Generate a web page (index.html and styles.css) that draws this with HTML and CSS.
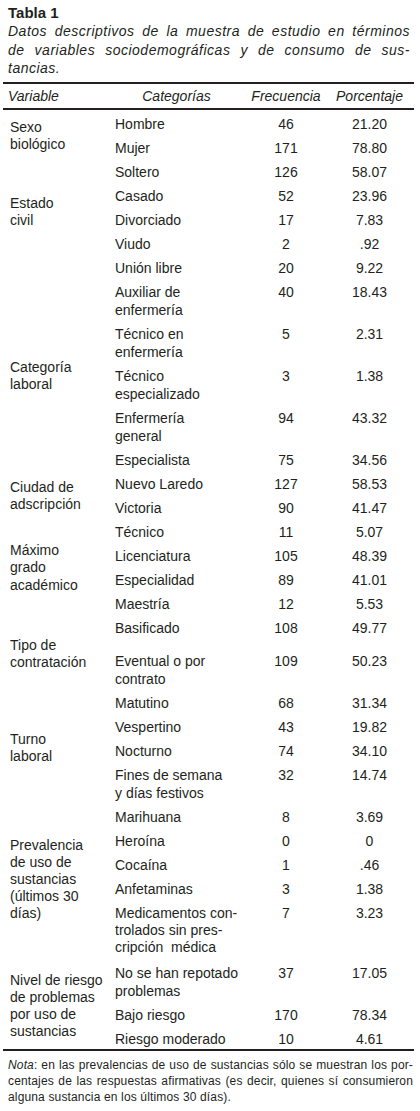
FILE: index.html
```html
<!DOCTYPE html>
<html lang="es">
<head>
<meta charset="utf-8">
<title>Tabla 1</title>
<link rel="stylesheet" href="styles.css">
</head>
<body>
<div class="page">
  <p class="title">Tabla 1</p>
  <p class="caption">
    <span class="jl">Datos descriptivos de la muestra de estudio en términos</span>
    <span class="jl">de variables sociodemográficas y de consumo de sus-</span>
    <span class="ll">tancias.</span>
  </p>
  <table class="data">
    <colgroup>
      <col class="c-var"><col class="c-cat"><col class="c-freq"><col class="c-pct">
    </colgroup>
    <thead>
      <tr><th class="h-var">Variable</th><th class="h-cat">Categorías</th><th class="h-num">Frecuencia</th><th class="h-num">Porcentaje</th></tr>
    </thead>
    <tbody>
      <tr><td class="var" rowspan="2">Sexo<br>biológico</td><td class="cat">Hombre</td><td class="num">46</td><td class="num">21.20</td></tr>
      <tr><td class="cat">Mujer</td><td class="num">171</td><td class="num">78.80</td></tr>

      <tr><td class="var var-up" rowspan="5">Estado<br>civil</td><td class="cat">Soltero</td><td class="num">126</td><td class="num">58.07</td></tr>
      <tr><td class="cat">Casado</td><td class="num">52</td><td class="num">23.96</td></tr>
      <tr><td class="cat">Divorciado</td><td class="num">17</td><td class="num">7.83</td></tr>
      <tr><td class="cat">Viudo</td><td class="num">2</td><td class="num">.92</td></tr>
      <tr><td class="cat">Unión libre</td><td class="num">20</td><td class="num">9.22</td></tr>

      <tr><td class="var" rowspan="5">Categoría<br>laboral</td><td class="cat">Auxiliar de<br>enfermería</td><td class="num">40</td><td class="num">18.43</td></tr>
      <tr><td class="cat">Técnico en<br>enfermería</td><td class="num">5</td><td class="num">2.31</td></tr>
      <tr><td class="cat">Técnico<br>especializado</td><td class="num">3</td><td class="num">1.38</td></tr>
      <tr><td class="cat">Enfermería<br>general</td><td class="num">94</td><td class="num">43.32</td></tr>
      <tr><td class="cat">Especialista</td><td class="num">75</td><td class="num">34.56</td></tr>

      <tr><td class="var" rowspan="2">Ciudad de<br>adscripción</td><td class="cat">Nuevo Laredo</td><td class="num">127</td><td class="num">58.53</td></tr>
      <tr><td class="cat">Victoria</td><td class="num">90</td><td class="num">41.47</td></tr>

      <tr><td class="var var-wide" rowspan="4">Máximo<br>grado<br>académico</td><td class="cat">Técnico</td><td class="num">11</td><td class="num">5.07</td></tr>
      <tr><td class="cat">Licenciatura</td><td class="num">105</td><td class="num">48.39</td></tr>
      <tr><td class="cat">Especialidad</td><td class="num">89</td><td class="num">41.01</td></tr>
      <tr><td class="cat">Maestría</td><td class="num">12</td><td class="num">5.53</td></tr>

      <tr class="row-tall"><td class="var" rowspan="2">Tipo de<br>contratación</td><td class="cat">Basificado</td><td class="num">108</td><td class="num">49.77</td></tr>
      <tr><td class="cat">Eventual o por<br>contrato</td><td class="num">109</td><td class="num">50.23</td></tr>

      <tr><td class="var" rowspan="4">Turno<br>laboral</td><td class="cat">Matutino</td><td class="num">68</td><td class="num">31.34</td></tr>
      <tr><td class="cat">Vespertino</td><td class="num">43</td><td class="num">19.82</td></tr>
      <tr><td class="cat">Nocturno</td><td class="num">74</td><td class="num">34.10</td></tr>
      <tr><td class="cat">Fines de semana<br>y días festivos</td><td class="num">32</td><td class="num">14.74</td></tr>

      <tr><td class="var var-prev" rowspan="5">Prevalencia<br>de uso de<br>sustancias<br>(últimos 30<br>días)</td><td class="cat">Marihuana</td><td class="num">8</td><td class="num">3.69</td></tr>
      <tr><td class="cat">Heroína</td><td class="num">0</td><td class="num">0</td></tr>
      <tr><td class="cat">Cocaína</td><td class="num">1</td><td class="num">.46</td></tr>
      <tr><td class="cat">Anfetaminas</td><td class="num">3</td><td class="num">1.38</td></tr>
      <tr class="row-three"><td class="cat">Medicamentos con-<br>trolados sin pres-<br>cripción&nbsp; médica</td><td class="num">7</td><td class="num">3.23</td></tr>

      <tr><td class="var" rowspan="3">Nivel de riesgo<br>de problemas<br>por uso de<br>sustancias</td><td class="cat">No se han repotado<br>problemas</td><td class="num">37</td><td class="num">17.05</td></tr>
      <tr><td class="cat">Bajo riesgo</td><td class="num">170</td><td class="num">78.34</td></tr>
      <tr><td class="cat">Riesgo moderado</td><td class="num">10</td><td class="num">4.61</td></tr>
    </tbody>
  </table>
  <p class="note">
    <span class="jl"><i>Nota</i>: en las prevalencias de uso de sustancias sólo se muestran los por-</span>
    <span class="jl">centajes de las respuestas afirmativas (es decir, quienes sí consumieron</span>
    <span class="ll">alguna sustancia en los últimos 30 días).</span>
  </p>
</div>
</body>
</html>
```

FILE: styles.css
```css
html, body {
  margin: 0;
  padding: 0;
  background: #ffffff;
}

body {
  font-family: "Liberation Sans", Arial, Helvetica, sans-serif;
  color: #231f20;
}

.page {
  width: 411px;
  margin: 0 6px 0 3px;
}

.title {
  margin: 0;
  padding: 4px 0 0 5px;
  font-size: 15px;
  line-height: 18px;
  font-weight: bold;
}

.caption {
  margin: 0;
  padding: 0 4px 0 5px;
  font-size: 14px;
  line-height: 18.67px;
  font-style: italic;
  letter-spacing: 0.5px;
}

.jl {
  display: block;
  text-align: justify;
  text-align-last: justify;
}

.ll {
  display: block;
  text-align: left;
}

.data {
  margin-top: 4px;
  width: 411px;
  table-layout: fixed;
  border-collapse: separate;
  border-spacing: 0;
  border-top: 2px solid #231f20;
  border-bottom: 2px solid #231f20;
  font-size: 14px;
  line-height: 18px;
}

.c-var { width: 110px; }
.c-cat { width: 134px; }
.c-freq { width: 78px; }
.c-pct { width: 89px; }

.data th {
  font-weight: normal;
  font-style: italic;
  padding: 3px 0;
  border-bottom: 2px solid #231f20;
  white-space: nowrap;
}

.data th.h-var {
  text-align: left;
  padding-left: 5px;
}

.data th.h-cat {
  text-align: center;
  padding-right: 7px;
}

.data th.h-num {
  text-align: center;
}

.data td {
  padding: 5px 0 1px 0;
  vertical-align: top;
  white-space: nowrap;
}

.data td.var {
  vertical-align: middle;
  line-height: 17px;
  padding-left: 7px;
}

.data td.var-up {
  padding-top: 1px;
  padding-bottom: 14px;
}

.data td.var-wide {
  line-height: 17.6px;
}

.data td.var-prev {
  padding-top: 2px;
  padding-bottom: 5px;
}

.data td.cat {
  padding-left: 2px;
  text-align: left;
}

.data td.num {
  text-align: center;
}

.data .row-tall td {
  padding-bottom: 10px;
}

.data .row-tall td.var {
  padding-bottom: 1px;
}

.data .row-three td.cat {
  line-height: 17px;
  padding-top: 6px;
  padding-bottom: 3px;
}

.note {
  margin: 6px 0 0 0;
  padding: 0 1px 0 5px;
  font-size: 12px;
  line-height: 16px;
  letter-spacing: 0.15px;
}
```
